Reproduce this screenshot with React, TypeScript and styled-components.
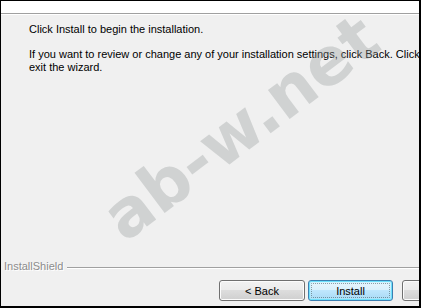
import React from "react";
import styled, { createGlobalStyle } from "styled-components";

const Global = createGlobalStyle`
  html, body { margin: 0; padding: 0; background: #ffffff; }
  body { font-family: "Liberation Sans", Arial, sans-serif; }
`;

const Frame = styled.div`
  position: relative;
  box-sizing: border-box;
  width: 421px;
  height: 308px;
  border-style: solid;
  border-color: #000;
  border-width: 1px 2px 2px 1px;
  overflow: hidden;
  background: #f0f0f0;
`;

const Dialog = styled.div`
  width: 498px;
  height: 305px;
  display: flex;
  flex-direction: column;
  font-family: "Liberation Sans", Arial, sans-serif;
  font-size: 11px;
  line-height: 13px;
  color: #000;
`;

const Header = styled.div`
  height: 12px;
  background: #ffffff;
  border-bottom: 1px solid #a0a0a0;
  box-shadow: 0 1px 0 #ffffff;
`;

const Content = styled.div`
  padding: 9px 0 0 28px;
  white-space: nowrap;
`;

const Paragraph = styled.p`
  margin: 0 0 12px 0;
`;

const Footer = styled.div`
  margin-top: auto;
  padding-bottom: 5px;
  display: flex;
  flex-direction: column;
`;

const BrandRow = styled.div`
  display: flex;
  align-items: flex-start;
  padding-left: 3px;
`;

const Brand = styled.span`
  color: #8c8c8c;
  text-shadow: 1px 1px 0 #ffffff;
  margin-right: 4px;
`;

const Rule = styled.div`
  flex: 1;
  margin-top: 7px;
  border-top: 1px solid #a0a0a0;
  border-bottom: 1px solid #ffffff;
`;

const ButtonRow = styled.div`
  display: flex;
  justify-content: flex-end;
  margin-top: 7px;
  padding-right: 11px;
`;

const Button = styled.button<{ $primary?: boolean; $gap?: number }>`
  position: relative;
  box-sizing: border-box;
  width: ${(p) => (p.$primary ? 85 : 86)}px;
  height: 21px;
  margin-left: ${(p) => p.$gap ?? 0}px;
  padding: 0;
  font-family: "Liberation Sans", Arial, sans-serif;
  font-size: 11px;
  color: #000;
  border-radius: 3px;
  border: 1px solid ${(p) => (p.$primary ? "#3c7fb1" : "#707070")};
  background: ${(p) =>
    p.$primary
      ? "linear-gradient(#eaf6fd 0%, #d9f0fc 50%, #bee6fd 50%, #a7d9f5 100%)"
      : "linear-gradient(#f2f2f2 0%, #ebebeb 50%, #dddddd 50%, #cfcfcf 100%)"};
  box-shadow: ${(p) =>
    p.$primary
      ? "inset 0 0 0 1px #6ee0fb, inset 0 0 3px 1px #b6f0ff"
      : "inset 0 0 0 1px #fcfcfc"};

  &::after {
    content: "";
    display: ${(p) => (p.$primary ? "block" : "none")};
    position: absolute;
    inset: 2px;
    border: 1px dotted rgba(0, 0, 0, 0.35);
    border-radius: 1px;
  }
`;

const Watermark = styled.span`
  position: absolute;
  left: 240px;
  top: 127px;
  transform: translate(-50%, -50%) rotate(-37deg);
  font-family: "DejaVu Sans", sans-serif;
  font-weight: bold;
  font-size: 66px;
  line-height: 1;
  color: rgba(150, 156, 156, 0.35);
  white-space: nowrap;
  pointer-events: none;
`;

export default function App() {
  return (
    <>
      <Global />
      <Frame>
        <Dialog>
          <Header />
          <Content>
            <Paragraph>Click Install to begin the installation.</Paragraph>
            <Paragraph>
              If you want to review or change any of your installation settings, click Back. Click
              <br />
              exit the wizard.
            </Paragraph>
          </Content>
          <Footer>
            <BrandRow>
              <Brand>InstallShield</Brand>
              <Rule />
            </BrandRow>
            <ButtonRow>
              <Button>&lt; Back</Button>
              <Button $primary $gap={3}>Install</Button>
              <Button $gap={9}>Cancel</Button>
            </ButtonRow>
          </Footer>
        </Dialog>
        <Watermark>ab-w.net</Watermark>
      </Frame>
    </>
  );
}
